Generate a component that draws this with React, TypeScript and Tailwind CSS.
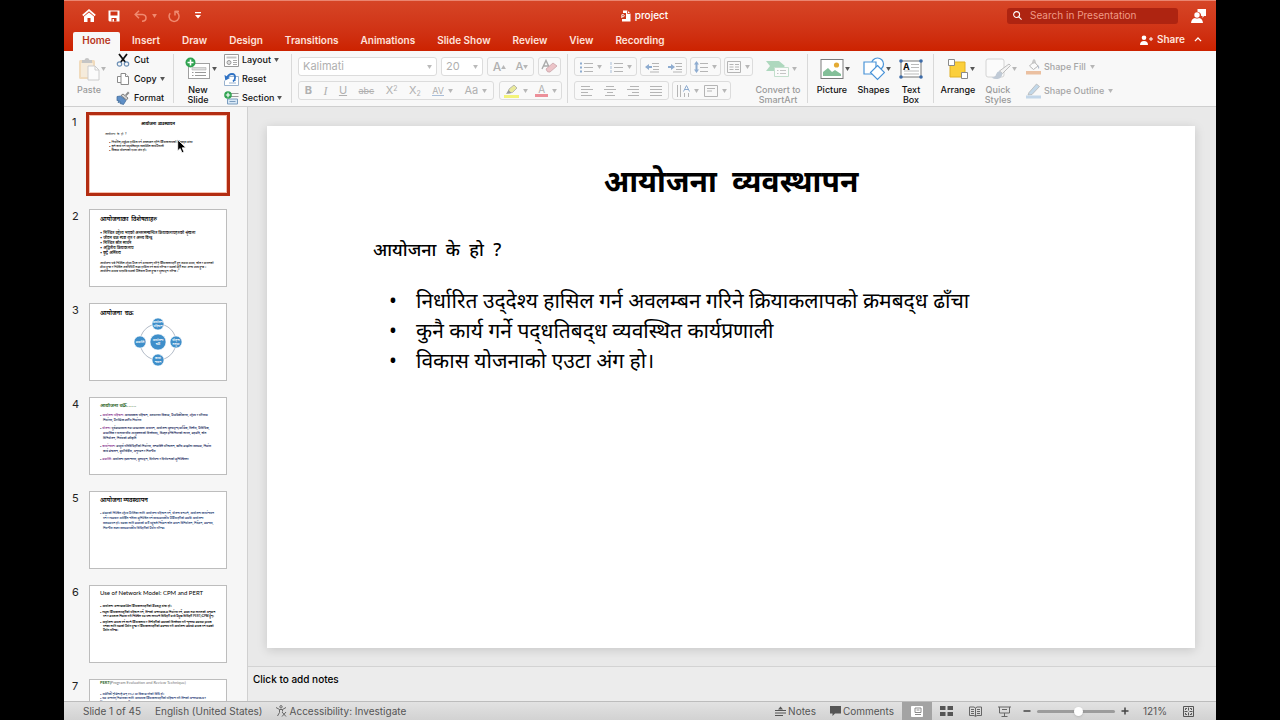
import type { ReactNode } from "react";

const tabs = ["Insert", "Draw", "Design", "Transitions", "Animations", "Slide Show", "Review", "View", "Recording"];

const Caret = ({ className = "" }: { className?: string }) => (
  <svg viewBox="0 0 6 5" className={`h-1 w-[5px] shrink-0 fill-[#555] ${className}`} aria-hidden="true">
    <path d="M0 0h6L3 5z" />
  </svg>
);

const Divider = () => <div className="my-[3px] w-px shrink-0 bg-[#d9d9d9]" />;

const BigButton = ({ icon, label, className = "", caret = true, disabled = false }: { icon: ReactNode; label: string; className?: string; caret?: boolean; disabled?: boolean }) => (
  <button disabled={disabled} className={`flex shrink-0 flex-col items-center justify-start pt-1 ${disabled ? "text-[#9a9a9a]" : "text-[#111]"} ${className}`}>
    <span className="relative flex h-7 items-center">
      <span className={disabled ? "opacity-45" : ""}>{icon}</span>
      {caret && <Caret className={`absolute top-3 left-full ml-px ${disabled ? "opacity-40" : ""}`} />}
    </span>
    <span className="mt-0.5 text-[9px] leading-[10px] font-medium">{label}</span>
  </button>
);

const SmallButton = ({ icon, label, caret = false, disabled = false }: { icon: ReactNode; label: string; caret?: boolean; disabled?: boolean }) => (
  <button disabled={disabled} className={`flex h-4 items-center gap-0.5 text-[9px] font-medium whitespace-nowrap ${disabled ? "text-[#a5a5a5]" : "text-[#111]"}`}>
    <span className={`w-4 ${disabled ? "opacity-50" : ""}`}>{icon}</span>
    {label}
    {caret && <Caret className={disabled ? "ml-0.5 opacity-40" : "ml-px"} />}
  </button>
);

const Box = ({ children, className = "" }: { children: ReactNode; className?: string }) => (
  <div className={`flex h-[19px] shrink-0 items-center justify-around rounded-[3px] border border-[#dcdcdc] bg-[#f9f9f9] text-[#b0b0b0] ${className}`}>{children}</div>
);

const Tool = ({ name, children }: { name: string; children: ReactNode }) => (
  <button disabled aria-label={name} className="flex h-full items-center gap-1 text-[11px] leading-none">
    {children}
  </button>
);

const PaleCaret = () => <Caret className="opacity-40" />;

const Lines = ({ d, children }: { d: string; children?: ReactNode }) => (
  <svg viewBox="0 0 14 12" className="h-3 w-3.5" fill="none" stroke="#b5b5b5">
    <path d={d} />
    {children}
  </svg>
);

const PasteIcon = () => (
  <svg viewBox="0 0 22 24" className="h-6 w-[22px]">
    <rect x="1" y="3" width="16" height="19" rx="1.5" fill="#e8b877" />
    <rect x="3" y="6" width="12" height="14" fill="#f3dcb9" />
    <path d="M4 6V3h2.500q.5-2 2.500-2t2.500 2H14v3z" fill="#888" />
    <path d="M10 9h7l4 4v10H10z" fill="#fff" stroke="#999" />
    <path d="M17 9v4h4" fill="none" stroke="#999" />
  </svg>
);

const CutIcon = () => (
  <svg viewBox="0 0 14 14" className="size-3.5" fill="none">
    <path d="M3 1l6.500 8.500M11 1L4.500 9.500" stroke="#111" strokeWidth="1.800" />
    <circle cx="3.500" cy="11" r="2.200" stroke="#6c8fb5" strokeWidth="1.200" />
    <circle cx="10.500" cy="11" r="2.200" stroke="#6c8fb5" strokeWidth="1.200" />
  </svg>
);

const CopyIcon = () => (
  <svg viewBox="0 0 14 14" className="size-3.5" fill="#fff" stroke="#8b8b8b">
    <path d="M1.500 4.500h5v6h-5z" />
    <path d="M5 1.500h4.500l3 3v8H5z" />
    <path d="M9.500 1.500v3h3" />
  </svg>
);

const FormatIcon = () => (
  <svg viewBox="0 0 14 14" className="size-3.5">
    <path d="M9 4l3-3.500 1.500 1.500L10.500 5z" fill="#8a8a8a" />
    <path d="M5 4.500l2-1.500 5 4-1.500 2z" fill="#d5d5d5" stroke="#666" strokeWidth=".8" />
    <path d="M1 5.500l3.500-.5 5.500 4.500-2.500 4-3.500-1 1-1.500-3 .5 1-2-2 .2z" fill="#5f8fc6" stroke="#3b6595" strokeWidth=".7" />
  </svg>
);

const NewSlideIcon = () => (
  <svg viewBox="0 0 26 24" className="h-6 w-[26px]">
    <rect x="3.500" y="6.500" width="21" height="15" fill="#fff" stroke="#a0a0a0" />
    <path d="M7 10.500h14v2.500H7z" fill="#ddd" stroke="#b0b0b0" strokeWidth=".6" />
    <path d="M7 15.500h1.500M10 15.500h11M7 18.500h1.500M10 18.500h11" stroke="#999" />
    <circle cx="5.500" cy="5.500" r="5" fill="#2fa350" />
    <path d="M5.500 2.500v6M2.500 5.500h6" stroke="#fff" strokeWidth="1.600" />
  </svg>
);

const LayoutIcon = () => (
  <svg viewBox="0 0 15 13" className="h-[13px] w-[15px]" fill="none" stroke="#999">
    <path d="M.5.5h14v12H.5z" fill="#fff" />
    <path d="M2.500 3.500h10" strokeWidth="2" stroke="#c2c2c2" />
    <circle cx="5" cy="8.500" r="2" fill="#ddd" />
    <path d="M9 6.500h4M9 8.500h4M9 10.500h4" stroke="#aaa" />
  </svg>
);

const ResetIcon = () => (
  <svg viewBox="0 0 15 14" className="h-3.5 w-[15px]" fill="none">
    <path d="M3.500 4.500h11v9h-14v-5" fill="#fff" stroke="#9ab3cf" />
    <path d="M5 11h7M9 8.500h3" stroke="#9ab3cf" />
    <path d="M3 6q1.500-4 5-4t3 4q0 2-2 3.500" stroke="#2f72c4" strokeWidth="1.800" />
    <path d="M.5 3l.8 5.500 4.700-2.500z" fill="#2f72c4" />
  </svg>
);

const SectionIcon = () => (
  <svg viewBox="0 0 15 14" className="h-3.5 w-[15px]">
    <path d="M6 2.500h8.500M6 5.500h8.500" stroke="#999" />
    <path d="M3.500 8h10v5h-10z" fill="#d8e8f6" stroke="#7b9dbf" />
    <path d="M5.500 10.500h6" stroke="#7b9dbf" />
    <circle cx="4" cy="4" r="3.800" fill="#2fa350" />
    <path d="M4 1.800v4.400M1.800 4h4.400" stroke="#fff" strokeWidth="1.200" />
  </svg>
);

const SmartArtIcon = () => (
  <svg viewBox="0 0 26 20" className="h-5 w-[26px]">
    <path d="M1 2h13l6 5-6 5H1l4-5z" fill="#55b378" />
    <path d="M9.500 8.500h14v9h-14z" fill="#fff" stroke="#87c29b" />
    <path d="M12 11.500h1.500M15 11.500h6M12 14.500h1.500M15 14.500h6" stroke="#888" />
  </svg>
);

const PictureIcon = () => (
  <svg viewBox="0 0 24 22" className="h-[22px] w-6">
    <rect x="1" y="1.500" width="22" height="19" fill="#fff" stroke="#7c7c7c" />
    <path d="M3 18v-4l5-4 4 4 3-2 6 4v2z" fill="#83bf98" />
    <circle cx="16.500" cy="7" r="2.600" fill="#e4ab35" />
  </svg>
);

const ShapesIcon = () => (
  <svg viewBox="0 0 22 24" className="h-6 w-[22px]" fill="#fff" stroke="#4a94d8" strokeWidth="1.200">
    <circle cx="14.500" cy="7" r="6" />
    <path d="M1 5h12v12H1z" />
    <path d="M14.500 8.500l7 7-7 7-7-7z" />
  </svg>
);

const TextBoxIcon = () => (
  <svg viewBox="0 0 24 22" className="h-[22px] w-6">
    <rect x="2" y="3" width="20" height="16" fill="#fff" stroke="#777" />
    <path d="M12 6.500h8M12 9.500h8M5 13h15M5 16h15" stroke="#bbb" />
    <g fill="#3d6ba8">
      <circle cx="2" cy="3" r="1.800" />
      <circle cx="22" cy="3" r="1.800" />
      <circle cx="2" cy="19" r="1.800" />
      <circle cx="22" cy="19" r="1.800" />
    </g>
    <text x="4" y="11.500" fontSize="9" fontWeight="700" fill="#111">A</text>
  </svg>
);

const ArrangeIcon = () => (
  <svg viewBox="0 0 22 22" className="size-[22px]">
    <path d="M3 4h15v15H3z" fill="#fbcf3b" stroke="#e0b025" />
    <path d="M1.500 1.500h6v6h-6zM14.500 14.500h6v6h-6z" fill="#fff" stroke="#8b8b8b" />
  </svg>
);

const QuickStylesIcon = () => (
  <svg viewBox="0 0 26 24" className="h-6 w-[26px]">
    <rect x="1" y="2" width="18" height="18" rx="2" fill="#fff" stroke="#aaa" />
    <path d="M24 7l1.500 1.500-8 8-3-2.500z" fill="#eee" stroke="#777" />
    <path d="M14.500 14l3 2.500q-1 5-5 5.500-3 .5-6-1.500 4-.5 4.500-3 .8-3 3.500-3.500z" fill="#7d93ad" />
  </svg>
);

const ShapeFillIcon = () => (
  <svg viewBox="0 0 15 16" className="h-4 w-[15px]">
    <path d="M3.500 7L8 2.500 12 7l-4.500 3.500z" fill="#fff" stroke="#777" />
    <path d="M7 5V1.500q1-1.500 2 0v3" fill="none" stroke="#777" />
    <path d="M12 6q2 2 1 4-1.500-1-1-4z" fill="#6c7fa0" />
    <path d="M0 12h15v3.500H0z" fill="#e08a4d" />
  </svg>
);

const ShapeOutlineIcon = () => (
  <svg viewBox="0 0 15 16" className="h-4 w-[15px]">
    <path d="M3 9.500L10.500 1 13.500 3.500 6 11.500l-4 .5z" fill="#8db9dc" stroke="#777" strokeWidth=".8" />
    <path d="M0 12.500h15v3H0z" fill="#8db6dc" />
  </svg>
);

const Header = () => (
  <header className="flex h-[51px] shrink-0 flex-col border-t border-[#ea8570] bg-gradient-to-b from-[#d64526] to-[#cc2200] text-white">
    <div className="flex h-[31px] shrink-0 items-center pb-0.5">
      <div className="flex flex-1 items-center pl-[18px]">
        <button aria-label="Home" className="mr-3">
          <svg viewBox="0 0 14 13" className="h-[13px] w-3.5" fill="none" stroke="#fff" strokeWidth="1.700">
            <path d="M.8 6.500L7 1.200l6.200 5.300" />
            <path d="M2 7.500L7 3.500l5 4V13H8.500V9h-3v4H2z" fill="#fff" stroke="none" />
          </svg>
        </button>
        <button aria-label="Save" className="mr-[14px]">
          <svg viewBox="0 0 12 12" className="size-3">
            <path d="M.5.500h11v11H1.500l-1-1z" fill="#fff" />
            <path d="M2.500 1.500h7v4h-7zM3.500 8h5v3.500h-5z" fill="#d03315" />
            <path d="M4.500 9h1.500v2.500H4.500z" fill="#fff" />
          </svg>
        </button>
        <button disabled aria-label="Undo" className="mr-2.5 flex items-center gap-1">
          <svg viewBox="0 0 14 12" className="h-3 w-3.5" fill="none" stroke="#f08a70" strokeWidth="1.500">
            <path d="M5 .8L1.200 4.500 5 8.200M1.500 4.500h7q3.500.3 3.500 3.500T8 11.200" />
          </svg>
          <Caret className="fill-[#f08a70]" />
        </button>
        <button disabled aria-label="Repeat" className="mr-3.5">
          <svg viewBox="0 0 14 14" className="size-3.5" fill="none" stroke="#f08a70" strokeWidth="1.500">
            <path d="M3.200 4.200a5 5 0 1 0 5-1.700h3.300" />
            <path d="M12 2.500H8v4" />
          </svg>
        </button>
        <button aria-label="Customize toolbar">
          <svg viewBox="0 0 6 7" className="h-[7px] w-1.5 fill-white">
            <path d="M0 0h6v1.300H0zM0 3h6L3 6.500z" />
          </svg>
        </button>
      </div>
      <div className="flex items-center gap-1 text-[10px] font-medium">
        <svg viewBox="0 0 11 12" className="h-3 w-[11px]">
          <path d="M3 .5h4.500l3 3v8H2V9h4V3H3z" fill="#fff" />
          <path d="M0 3.500h5.500V9H0z" fill="#c93417" />
          <path d="M1.800 8V4.700h1.500a1 1 0 0 1 0 2H2" fill="none" stroke="#fff" strokeWidth=".9" />
          <path d="M7.500.5v3h3" fill="none" stroke="#d03315" strokeWidth=".8" />
        </svg>
        project
      </div>
      <div className="flex flex-1 items-center justify-end gap-[13px] pr-2.5">
        <label className="flex h-4 w-[171px] items-center gap-2 rounded-[3px] bg-[#ae2411] px-1.5">
          <svg viewBox="0 0 10 10" className="size-[9px] shrink-0" fill="none" stroke="#fff" strokeWidth="1.200">
            <circle cx="4" cy="4" r="3.300" />
            <path d="M6.500 6.500L9.500 9.500" />
          </svg>
          <input type="search" aria-label="Search in Presentation" placeholder="Search in Presentation" className="w-full min-w-0 bg-transparent text-[10px] outline-none placeholder:text-[#f09a86]" />
        </label>
        <button aria-label="Account">
          <svg viewBox="0 0 15 14" className="h-3.5 w-[15px] fill-white">
            <path d="M6.500 0H15v7h-2l-1.500 2V7h-1.300Q10 3 6.500 2.700z" />
            <circle cx="6" cy="6" r="2.700" />
            <path d="M0 14q.5-4.500 4-5 2 1.200 4 0 3.500.5 4 5z" />
          </svg>
        </button>
      </div>
    </div>
    <nav className="flex flex-1 items-stretch pl-[9px] text-[10px] font-semibold text-[#ffe3dc]">
      <button className="w-[47px] rounded-t-[2px] bg-[#f8f8f8] pb-0.5 text-[#b7371d]">Home</button>
      <div className="ml-3 flex items-center gap-[22px] pb-0.5">
        {tabs.map((tab) => (
          <button key={tab} className="whitespace-nowrap">{tab}</button>
        ))}
      </div>
      <div className="ml-auto flex items-center gap-[9px] pr-3.5 pb-1">
        <button className="flex items-center gap-1">
          <svg viewBox="0 0 13 10" className="h-2.5 w-[13px] fill-white">
            <circle cx="4" cy="2.700" r="2.300" />
            <path d="M0 10q0-4 4-4t4 4zM9 3.500h1.500V2h1v1.500H13v1h-1.500V6h-1V4.500H9z" />
          </svg>
          Share
        </button>
        <button aria-label="Collapse ribbon">
          <svg viewBox="0 0 9 6" className="h-[5px] w-2" fill="none" stroke="#fff" strokeWidth="1.500">
            <path d="M.8 5L4.500 1.200 8.200 5" />
          </svg>
        </button>
      </div>
    </nav>
  </header>
);

const FontGroup = () => (
  <div className="flex w-[275px] shrink-0 flex-col gap-[5px] pt-1.5 pl-1.5">
    <div className="flex gap-1">
      <Box className="w-[139px] bg-white px-1">
        <select aria-label="Font" disabled className="w-full appearance-none text-[11px] opacity-100">
          <option>Kalimati</option>
        </select>
        <PaleCaret />
      </Box>
      <Box className="w-[42px] bg-white px-1">
        <select aria-label="Font size" disabled className="w-full appearance-none text-[11px] opacity-100">
          <option>20</option>
        </select>
        <PaleCaret />
      </Box>
      <Box className="w-[47px]">
        <Tool name="Increase font size"><span className="text-xs font-medium">A</span><Caret className="-ml-1 rotate-180 opacity-40" /></Tool>
        <Tool name="Decrease font size"><span className="font-medium">A</span><Caret className="-ml-1 opacity-40" /></Tool>
      </Box>
      <Box className="w-[23px]">
        <Tool name="Clear formatting">
          <svg viewBox="0 0 17 15" className="h-[15px] w-[17px]">
            <path d="M1 10L5 1.500 9 10M2.500 7h5" fill="none" stroke="#aaa" strokeWidth="1.400" />
            <path d="M5 10l7-6 4 3-7 6q-3 1-4-3z" fill="#ecc4c8" stroke="#c9a5a9" strokeWidth=".8" />
          </svg>
        </Tool>
      </Box>
    </div>
    <div className="flex gap-[5px]">
      <Box className="w-[196px]">
        <Tool name="Bold"><b>B</b></Tool>
        <Tool name="Italic"><i className="font-['Liberation_Serif',serif] text-xs">I</i></Tool>
        <Tool name="Underline"><span className="underline">U</span></Tool>
        <Tool name="Strikethrough"><span className="text-[9px] line-through">abc</span></Tool>
        <Tool name="Superscript"><span>X<sup className="text-[7px]">2</sup></span></Tool>
        <Tool name="Subscript"><span>X<sub className="text-[7px]">2</sub></span></Tool>
        <Tool name="Character spacing">
          <span className="border-b border-[#a9bed8] text-[9px]">AV</span>
          <PaleCaret />
        </Tool>
        <Tool name="Change case">Aa<PaleCaret /></Tool>
      </Box>
      <Box className="w-[63px]">
        <Tool name="Highlight">
          <svg viewBox="0 0 15 14" className="h-3.5 w-[15px]">
            <path d="M0 11h15v3H0z" fill="#f3f37a" />
            <path d="M4 9l1-4 5-4 3 3-4.500 4.500z" fill="#e9e99b" stroke="#aaa" strokeWidth=".8" />
            <path d="M2 10l2.500-4 3 3z" fill="#999" />
          </svg>
          <PaleCaret />
        </Tool>
        <Tool name="Font color">
          <span className="border-b-[3px] border-[#ec8f99] px-[3px] text-[10px]">A</span>
          <PaleCaret />
        </Tool>
      </Box>
    </div>
  </div>
);

const ParagraphGroup = () => (
  <div className="flex w-[183px] shrink-0 flex-col gap-[5px] pt-1.5 pl-1.5">
    <div className="flex gap-[3px]">
      <Box className="w-[63px]">
        <Tool name="Bullets"><Lines d="M5 2.500h9M5 6.500h9M5 10.500h9"><path d="M1 2.500h2M1 6.500h2M1 10.500h2" stroke="#8eacd0" strokeWidth="2" /></Lines><PaleCaret /></Tool>
        <Tool name="Numbering"><Lines d="M5 2.500h9M5 6.500h9M5 10.500h9"><path d="M2 1v3M2 5v3M2 9v3" stroke="#a9bed8" /></Lines><PaleCaret /></Tool>
      </Box>
      <Box className="w-[47px]">
        <Tool name="Decrease indent"><Lines d="M7 2.500h7M8 5.500h6M8 8.500h6M5 11h9"><path d="M0 6l4-3v2h3v2H4v2z" fill="#8eacd0" stroke="none" /></Lines></Tool>
        <Tool name="Increase indent"><Lines d="M7 2.500h7M8 5.500h6M8 8.500h6M5 11h9"><path d="M7 6L3 3v2H0v2h3v2z" fill="#8eacd0" stroke="none" /></Lines></Tool>
      </Box>
      <Box className="w-[31px]">
        <Tool name="Line spacing"><Lines d="M6 2.500h8M6 6.500h8M6 10.500h8"><path d="M2.500 0l2.500 3.500H3.500v5H5L2.500 12 0 8.500h1.500v-5H0z" fill="#8eacd0" stroke="none" /></Lines><PaleCaret /></Tool>
      </Box>
      <Box className="w-[29px]">
        <Tool name="Columns"><Lines d="M.5.5h13v11H.5zM2.500 3.500h4M8 3.500h4M2.500 6h4M8 6h4M2.500 8.500h4M8 8.500h4" /><PaleCaret /></Tool>
      </Box>
    </div>
    <div className="flex gap-[3px]">
      <Box className="w-[95px]">
        <Tool name="Align left"><Lines d="M1 1.500h9M1 4.500h12M1 7.500h7M1 10.500h11" /></Tool>
        <Tool name="Center"><Lines d="M3 1.500h8M1 4.500h12M4 7.500h6M2 10.500h10" /></Tool>
        <Tool name="Align right"><Lines d="M4 1.500h9M1 4.500h12M6 7.500h7M2 10.500h11" /></Tool>
        <Tool name="Justify"><Lines d="M1 1.500h12M1 4.500h12M1 7.500h12M1 10.500h12" /></Tool>
      </Box>
      <Box className="w-[59px]">
        <Tool name="Text direction"><Lines d="M1.500 0v12M4.500 0v12M8.500 8v4M12.500 8v4"><path d="M7.500 6.500l3-6 3 6M8.500 4.500h4" stroke="#8eacd0" /></Lines><PaleCaret /></Tool>
        <Tool name="Align text"><Lines d="M.5 11.500V.500h13v11zM3 3.500h8M3 6h5" /><PaleCaret /></Tool>
      </Box>
    </div>
  </div>
);

const Ribbon = () => (
  <div className="flex h-14 shrink-0 overflow-hidden border-b border-[#cfcfcf] bg-[#f8f8f8]">
    <BigButton icon={<PasteIcon />} label="Paste" disabled className="ml-2 w-[34px]" />
    <div className="flex w-[67px] shrink-0 flex-col gap-[3px] pt-px pl-2.5">
      <SmallButton icon={<CutIcon />} label="Cut" />
      <SmallButton icon={<CopyIcon />} label="Copy" caret />
      <SmallButton icon={<FormatIcon />} label="Format" />
    </div>
    <Divider />
    <BigButton icon={<NewSlideIcon />} label="New Slide" className="ml-2 w-8" />
    <div className="flex w-[77px] shrink-0 flex-col gap-[3px] pt-px pl-2.5">
      <SmallButton icon={<LayoutIcon />} label="Layout" caret />
      <SmallButton icon={<ResetIcon />} label="Reset" />
      <SmallButton icon={<SectionIcon />} label="Section" caret />
    </div>
    <Divider />
    <FontGroup />
    <Divider />
    <ParagraphGroup />
    <BigButton icon={<SmartArtIcon />} label="Convert to SmartArt" disabled className="mr-0.5 w-[54px]" />
    <Divider />
    <div className="flex w-[125px] shrink-0 justify-between pr-1.5 pl-1">
      <BigButton icon={<PictureIcon />} label="Picture" className="w-10" />
      <BigButton icon={<ShapesIcon />} label="Shapes" className="w-10" />
      <BigButton icon={<TextBoxIcon />} label="Text Box" caret={false} className="w-8" />
    </div>
    <Divider />
    <BigButton icon={<ArrangeIcon />} label="Arrange" className="ml-1 w-10" />
    <BigButton icon={<QuickStylesIcon />} label="Quick Styles" disabled className="w-10" />
    <div className="flex flex-col gap-2 pt-2 pl-2">
      <SmallButton icon={<ShapeFillIcon />} label="Shape Fill" caret disabled />
      <SmallButton icon={<ShapeOutlineIcon />} label="Shape Outline" caret disabled />
    </div>
  </div>
);

const ThumbOne = () => (
  <div className="px-4 pt-1.5">
    <p className="text-center text-[4px] leading-[6px] font-bold">आयोजना&nbsp; व्यवस्थापन</p>
    <p className="mt-[5px] text-[3px] leading-[5px]">आयोजना&nbsp; के&nbsp; हो&nbsp; ?</p>
    <ul className="mt-[3px] pl-1 text-[3px] leading-[4px] font-medium whitespace-nowrap">
      <li>• निर्धारित उद्‌देश्य हासिल गर्न अवलम्बन गरिने क्रियाकलापको क्रमबद्‌ध ढाँचा</li>
      <li>• कुनै कार्य गर्ने पद्‌धतिबद्‌ध व्यवस्थित कार्यप्रणाली</li>
      <li>• विकास योजनाको एउटा अंग हो।</li>
    </ul>
  </div>
);

const ThumbTwo = () => (
  <div className="px-[11px] pt-1.5">
    <p className="text-[6px] leading-[8px] font-semibold">आयोजनाका&nbsp; विशेषताहरु</p>
    <ul className="mt-[7px] text-[4px] leading-[5px] font-medium whitespace-nowrap">
      <li>• निश्चित उद्देश्य भएको अन्तरसम्बन्धित क्रियाकलापहरुको श्रृंखला</li>
      <li>• जीवन चक्र स्पष्ट शुरु र अन्त्य बिन्दु</li>
      <li>• निश्चित स्रोत साधन</li>
      <li>• अद्वितीय क्रियाकलाप</li>
      <li>• छुट्टै अस्तित्व</li>
    </ul>
    <p className="mt-1.5 text-[3px] leading-[4px] font-medium">
      आयोजना भन्ने निश्चित उद्देश्य प्राप्त गर्न सञ्चालन गरिने क्रियाकलापहरु हुन् जसमा समय, स्रोत र साधनको सीमा हुन्छ र निश्चित अवधिभित्र लक्ष्य हासिल गर्न कार्य गरिन्छ र यसको शुरु तथा अन्त्य स्पष्ट हुन्छ । आयोजना सम्पन्न भएपछि यसको प्रतिफल प्राप्त हुन्छ र मूल्याङ्कन गरिन्छ ।
    </p>
  </div>
);

const cycle = [
  { x: 69, y: 21, r: 6, lines: ["आयोजना", "पहिचान"] },
  { x: 87, y: 39, r: 6, lines: ["योजना", "तर्जुमा"] },
  { x: 69, y: 57, r: 6, lines: ["कार्या", "न्वयन"] },
  { x: 51, y: 39, r: 6, lines: ["समाप्ति"] },
  { x: 69, y: 39, r: 8, lines: ["आयोजना", "चक्र"] },
];

const ThumbThree = () => (
  <div className="relative h-full px-[11px] pt-1.5">
    <p className="text-[6px] leading-[8px] font-semibold">आयोजना&nbsp; चक्र</p>
    <svg viewBox="0 0 138 78" className="absolute inset-0 size-full">
      <circle cx="69" cy="39" r="18" fill="none" stroke="#b3bcc8" />
      {cycle.map((node) => (
        <g key={`${node.x}-${node.y}`}>
          <circle cx={node.x} cy={node.y} r={node.r} fill="#3f8fca" stroke="#fff" strokeWidth=".6" />
          {node.lines.map((line, i) => (
            <text key={line} x={node.x} y={node.y + 1 + (i * 2 - (node.lines.length - 1)) * 2} textAnchor="middle" fontSize="3" fontWeight="600" fill="#fff">
              {line}
            </text>
          ))}
        </g>
      ))}
    </svg>
  </div>
);

const ThumbFour = () => (
  <div className="px-[11px] pt-1">
    <p className="text-[5px] leading-[8px] font-semibold text-[#2b5f1c]">आयोजना चक्र......</p>
    <ul className="mt-1 flex flex-col gap-[3px] pl-[3px] text-[3px] leading-[5px] font-semibold text-[#26305f]">
      <li className="-indent-[3px]">• <span className="text-[#8c3a92]">आयोजना पहिचान:</span> आवश्यकता पहिचान, अवधारणा विकास, प्राथमिकीकरण, उद्देश्य र परिणाम निर्धारण, प्रारम्भिक स्वरुप निर्धारण</li>
      <li className="-indent-[3px]">• <span className="text-[#8c3a92]">योजना:</span> पूर्वसम्भाव्यता तथा सम्भाव्यता अध्ययन, आयोजना मूल्याङ्कन(आर्थिक, वित्तीय, प्राविधिक, सामाजिक र वातावरणीय उपयुक्तताको विश्लेषण), विस्तृत इन्जिनियरको लागत, सहमति, स्रोत विनियोजन, निर्णयको स्वीकृति</li>
      <li className="-indent-[3px]">• <span className="text-[#8c3a92]">कार्यान्वयन:</span> सम्पूर्ण गतिविधिहरुको निर्धारण, जनशक्ति परिचालन, खरिद सम्झौता व्यवस्था, निर्माण कार्य संचालन, सुपरिवेक्षण, अनुगमन र नियन्त्रण</li>
      <li className="-indent-[3px]">• <span className="text-[#8c3a92]">समाप्ति:</span> आयोजना हस्तान्तरण, मूल्याङ्कन, दिगोपना र दिगोपनाको सुनिश्चितता</li>
    </ul>
  </div>
);

const ThumbFive = () => (
  <div className="px-[11px] pt-[5px]">
    <p className="text-[6px] leading-[8px] font-semibold">आयोजना व्यवस्थापन</p>
    <p className="mt-[7px] pl-[3px] -indent-[3px] text-[3px] leading-[5px] font-semibold text-[#2b4377]">
      • संस्थाको निश्चित उद्देश्य प्राप्तिका लागि आयोजना पहिचान गर्ने, योजना बनाउने, आयोजना कार्यान्वयन गर्ने र त्यसबाट अपेक्षित नतिजा सुनिश्चित गर्न व्यवस्थापकीय प्रक्रियाहरुको समष्टि आयोजना व्यवस्थापन हो। यसका लागि समयको मात्रै पहुँचले निर्देशन स्रोत साधन विनियोजन, निर्देशन, समन्वय, नियन्त्रण जस्ता व्यवस्थापकीय विधिहरुको प्रयोग गरिन्छ।
    </p>
  </div>
);

const ThumbSix = () => (
  <div className="px-[11px] pt-1">
    <p className="font-['Lato',sans-serif] text-[6px] leading-[8px]">Use of Network Model: CPM and PERT</p>
    <ul className="mt-[7px] flex flex-col gap-0.5 pl-[3px] text-[3px] leading-[4px] font-semibold">
      <li className="-indent-[3px]">• आयोजना अन्तरसम्बन्धित क्रियाकलापहरुको क्रमबद्ध ढाँचा हो।</li>
      <li className="-indent-[3px]">• त्यस्ता क्रियाकलापहरुको पहिचान गर्ने, तिनको अन्तरसम्बन्ध निर्धारण गर्ने, समय तथा लागतको अनुमान गर्ने र सञ्जाल निर्माण गरी निश्चित पथ पत्ता लगाउने विधिहरु मध्ये प्रमुख विधिहरु PERT/CPM हुन्।</li>
      <li className="-indent-[3px]">• आयोजना सम्पन्न गर्न लाग्ने क्रियाकलाप र तिनीहरुको समयको विश्लेषण गरी न्यूनतम समयमा सम्पन्न गर्नका लागि यसको प्रयोग हुन्छ र क्रियाकलापहरुको समन्वय गरी आयोजना समयमै सम्पन्न गर्न यसको प्रयोग गरिन्छ।</li>
    </ul>
  </div>
);

const ThumbSeven = () => (
  <div className="px-[11px] pt-px">
    <p className="font-['Lato',sans-serif] text-[4px] leading-[6px] text-[#777]"><b className="text-[#2b5f1c]">PERT(</b>Program Evaluation and Review Technique)</p>
    <p className="mt-1.5 text-[3px] leading-[4px] font-semibold text-[#2b4377]">
      • अमेरिकी नौसेनाले सन् १९५८ मा विकास गरेको विधि हो।<br />• यस अन्तर्गत निर्माणका लागि आवश्यक क्रियाकलापहरुको पहिचान गरी तिनको अन्तरसम्बन्ध र निरन्तरता कार्यसम्पादन गरिन्छ।
    </p>
  </div>
);

const thumbs = [ThumbOne, ThumbTwo, ThumbThree, ThumbFour, ThumbFive, ThumbSix, ThumbSeven];

const Sidebar = () => (
  <aside className="w-[184px] shrink-0 overflow-hidden border-r border-[#d0d0d0] bg-[#f6f6f6]">
    <ol className="flex flex-col gap-4 pt-2">
      {thumbs.map((Thumb, i) => (
        <li key={i} className="flex h-[78px] shrink-0">
          <span className="w-[25px] shrink-0 pl-2 text-[11px] leading-[14px] text-[#222]">{i + 1}</span>
          <button
            aria-label={`Slide ${i + 1}`}
            className={`relative flex w-[138px] flex-col items-stretch justify-start bg-white text-left text-black ${i === 0 ? "outline-[3px] outline-[#b32d12] ring-1 ring-[#f5bfae] ring-inset" : "outline-1 -outline-offset-1 outline-[#bdbdbd]"}`}
          >
            <span className="block h-full overflow-hidden">
              <Thumb />
            </span>
            {i === 0 && (
              <svg viewBox="0 0 10 15" className="absolute top-6 left-[88px] h-[15px] w-2.5">
                <path d="M.7.8v11l2.500-2.300 1.800 4.300 2-.8-1.800-4.200H9z" fill="#000" stroke="#fff" strokeWidth=".8" />
              </svg>
            )}
          </button>
        </li>
      ))}
    </ol>
  </aside>
);

const Slide = () => (
  <section className="aspect-video w-full bg-white px-[106px] pt-8 text-black shadow-[0_2px_10px_rgba(0,0,0,0.15)]">
    <h1 className="text-center text-[30px] leading-[46px] font-bold">आयोजना&nbsp; व्यवस्थापन</h1>
    <p className="mt-7 text-lg leading-[34px] font-medium">आयोजना&nbsp; के&nbsp; हो&nbsp; ?</p>
    <ul className="mt-[19px] text-[21px] leading-[30px]">
      {[
        "निर्धारित उद्‌देश्य हासिल गर्न अवलम्बन गरिने क्रियाकलापको क्रमबद्‌ध ढाँचा",
        "कुनै कार्य गर्ने पद्‌धतिबद्‌ध व्यवस्थित कार्यप्रणाली",
        "विकास योजनाको एउटा अंग हो।",
      ].map((line) => (
        <li key={line} className="flex whitespace-nowrap">
          <span className="w-[43px] pl-4">•</span>
          {line}
        </li>
      ))}
    </ul>
  </section>
);

const StatusBar = () => (
  <footer className="flex h-[19px] shrink-0 items-center border-t border-[#bcbcbc] bg-gradient-to-b from-[#e2e2e2] to-[#d2d2d2] pl-[19px] text-[10px] text-[#555]">
    <span>Slide 1 of 45</span>
    <button className="ml-3.5">English (United States)</button>
    <button className="ml-3 flex items-center gap-[3px]">
      <svg viewBox="0 0 12 12" className="size-3" fill="none" stroke="#666">
        <circle cx="6" cy="1.800" r="1.200" />
        <path d="M1 2.500l3.500 2v3L2.500 11M11 2.500l-3.500 2v2M4.500 4.500h3M7 7l4 4.500M11 7l-4 4.500" />
      </svg>
      Accessibility: Investigate
    </button>
    <div className="ml-auto flex h-full items-center pr-[22px]">
      <button className="flex items-center gap-0.5">
        <svg viewBox="0 0 11 10" className="h-2.5 w-[11px]" stroke="#555">
          <path d="M3 3.500L5.500.5 8 3.500z" fill="#555" stroke="none" />
          <path d="M0 4.500h11M0 7h11M0 9.500h8" />
        </svg>
        Notes
      </button>
      <button className="ml-3.5 flex items-center gap-0.5">
        <svg viewBox="0 0 11 10" className="h-2.5 w-[11px] fill-[#555]">
          <path d="M0 0h11v7.500H5L2.500 10V7.500H0z" />
        </svg>
        Comments
      </button>
      <button aria-label="Normal view" className="ml-2 flex h-full w-[30px] items-center justify-center bg-[#a3a3a3]">
        <svg viewBox="0 0 12 11" className="h-[11px] w-3" fill="none" stroke="#fff">
          <path d="M.5.500h11v10H.5z" fill="#fff" />
          <path d="M4 2h6v4.500H4zM4 8.500h6M5.500 4h3" stroke="#8a8a8a" />
        </svg>
      </button>
      <button aria-label="Slide sorter" className="ml-2">
        <svg viewBox="0 0 13 10" className="h-2.5 w-[13px] fill-[#555]">
          <path d="M0 0h5.500v4H0zM7.500 0H13v4H7.500zM0 6h5.500v4H0zM7.500 6H13v4H7.500z" />
        </svg>
      </button>
      <button aria-label="Reading view" className="ml-4">
        <svg viewBox="0 0 13 11" className="h-[11px] w-[13px]" fill="none" stroke="#666">
          <path d="M.5 1h4.500l1.500 1L8 1h4.500v8.500H8l-1.500 1-1.500-1H.5zM6.500 2v8M2 3.500h3M2 5.500h3M2 7.500h3M8 3.500h3M8 5.500h3M8 7.500h3" />
        </svg>
      </button>
      <button aria-label="Slide show" className="ml-4">
        <svg viewBox="0 0 13 11" className="h-[11px] w-[13px]" fill="none" stroke="#666">
          <path d="M0 1h13M1.500 1v6h10V1M4 3.500h5M6.500 7v3.500M3.500 10.500h6" />
        </svg>
      </button>
      <button aria-label="Zoom out" className="ml-3">
        <svg viewBox="0 0 8 8" className="size-2" stroke="#444" strokeWidth="1.500"><path d="M.5 4h7" /></svg>
      </button>
      <input
        type="range"
        aria-label="Zoom"
        min="0"
        max="100"
        defaultValue="54"
        className="mx-1.5 h-[3px] w-[78px] appearance-none rounded-full bg-[#9c9c9c] [&::-webkit-slider-thumb]:size-[9px] [&::-webkit-slider-thumb]:appearance-none [&::-webkit-slider-thumb]:rounded-full [&::-webkit-slider-thumb]:bg-white [&::-webkit-slider-thumb]:shadow"
      />
      <button aria-label="Zoom in">
        <svg viewBox="0 0 8 8" className="size-2" stroke="#444" strokeWidth="1.500"><path d="M.5 4h7M4 .5v7" /></svg>
      </button>
      <span className="ml-3.5">121%</span>
      <button aria-label="Fit to window" className="ml-4">
        <svg viewBox="0 0 11 11" className="size-[11px]" fill="none" stroke="#555">
          <path d="M.5.500h10v10H.5z" />
          <path d="M5.500 1.500v3M5.500 6.500v3M1.500 5.500h3M6.500 5.500h3M2.500 4V2.500H4M7 2.500h1.500V4M8.500 7v1.500H7M4 8.500H2.500V7" />
        </svg>
      </button>
    </div>
  </footer>
);

export default function App() {
  return (
    <div className="h-screen bg-black px-16 font-['Inter','Noto_Sans',sans-serif]">
      <div className="flex h-full flex-col overflow-hidden">
        <Header />
        <Ribbon />
        <div className="flex min-h-0 flex-1">
          <Sidebar />
          <main className="flex min-w-0 flex-1 flex-col bg-[#e9e9e9]">
            <div className="min-h-0 flex-1 overflow-hidden pt-[19px] pr-[21px] pl-[19px] font-['Noto_Sans',sans-serif]">
              <Slide />
            </div>
            <textarea aria-label="Notes" placeholder="Click to add notes" className="h-[35px] shrink-0 resize-none border-t border-[#d3d3d3] bg-[#ececec] px-[5px] pt-[5px] text-[10px] font-medium outline-none placeholder:text-black" />
          </main>
        </div>
        <StatusBar />
      </div>
    </div>
  );
}
